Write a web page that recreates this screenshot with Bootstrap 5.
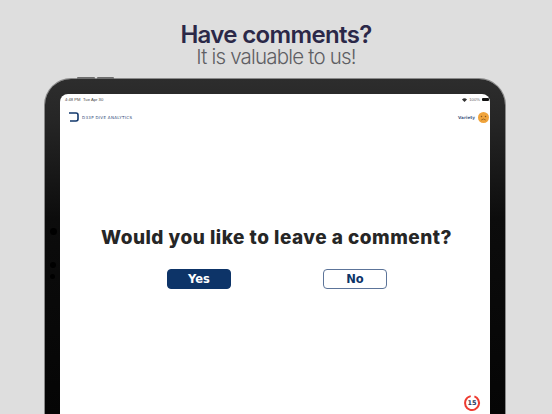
<!DOCTYPE html>
<html lang="en">
  <head>
    <meta charset="UTF-8" />
    <title>Have comments?</title>
    <link href="https://cdn.jsdelivr.net/npm/bootstrap@5.3.3/dist/css/bootstrap.min.css" rel="stylesheet" />
    <style>
      html, body { height: 414px; overflow: hidden; }
      body { background: #dedede; font-family: Inter, sans-serif; }
      .promo-head { height: 79px; padding-top: 23px; }
      .promo-title { font: 600 24px/24px Inter, sans-serif; letter-spacing: -.65px; color: #2b2848; margin: 0; }
      .promo-sub { font: 300 20.5px/20px Inter, sans-serif; letter-spacing: -.8px; color: #5f5f64; margin: 0; }
      .tablet { width: 460px; height: 335px; margin-left: 45px; padding: 15px 15px 0; background: linear-gradient(#2d2d2d 0, #262626 40px, #0c0c0c 140px, #050505 100%); border-radius: 26px 26px 0 0; position: relative; box-shadow: 0 0 0 1px #8a8a8a; }
      .tablet-btn { position: absolute; top: -2px; height: 2px; background: #6d6d6d; border-radius: 1px 1px 0 0; }
      .tablet-btn-a { left: 32px; width: 18px; }
      .tablet-btn-b { left: 52px; width: 17px; }
      .cam { position: absolute; left: 5px; border-radius: 50%; background: #000; }
      .screen { height: 320px; background: #fff; border-radius: 8px 8px 0 0; position: relative; }
      .status-line { height: 11px; padding: 0 1px 0 5px; font: 400 4.2px/11px "Liberation Sans", sans-serif; color: #444; }
      .status-right { gap: 2px; }
      .wifi-pct { color: #666; }
      .batt { width: 7px; height: 3px; background: #111; border-radius: 1px; }
      .app-bar { height: 22px; padding: 0 1px 0 9px; margin-top: 1px; }
      .brand-group { gap: 3px; }
      .brand-text { font: 400 4px "DejaVu Sans", sans-serif; letter-spacing: .32px; color: #2f4a78; }
      .variety { font: 700 4.2px "DejaVu Sans", sans-serif; color: #4a5f88; }
      .question { font: 800 19px/26px Inter, sans-serif; letter-spacing: .49px; color: #262626; margin: 0; padding: 97px 0 0 3px; text-align: center; }
      .answer-row { margin-top: 18px; padding: 0 0 0 107px; gap: 92px; }
      .answer-btn { width: 64px; height: 20px; padding: 0; font: 700 11.5px/18px "DejaVu Sans", sans-serif; border-radius: 4px; border: 1px solid #0d3468; }
      .answer-yes { background: #0d3468; color: #fff; }
      .answer-no { background: #fff; color: #0d3468; border-color: #5c7499; }
      .timer { position: absolute; left: 403px; top: 300px; }
      .timer text { font: 700 6.5px "DejaVu Sans", sans-serif; fill: #2b3a5c; }
    </style>
  </head>
  <body>
    <div class="promo-head text-center">
      <h1 class="promo-title">Have comments?</h1>
      <p class="promo-sub">It is valuable to us!</p>
    </div>

    <div class="tablet">
      <span class="tablet-btn tablet-btn-a"></span>
      <span class="tablet-btn tablet-btn-b"></span>
      <span class="cam" style="top:149px;width:7px;height:7px"></span>
      <span class="cam" style="top:183px;width:6px;height:6px"></span>
      <span class="cam" style="top:195px;width:5px;height:5px"></span>

      <div class="screen">
        <div class="status-line d-flex justify-content-between align-items-center">
          <span>4:48 PM&nbsp;&nbsp;Tue Apr 30</span>
          <span class="status-right d-flex align-items-center">
            <svg width="5" height="4" viewBox="0 0 10 8"><path d="M0 3a7 7 0 0 1 10 0L5 8z" fill="#333"/></svg>
            <span class="wifi-pct">100%</span>
            <span class="batt"></span>
          </span>
        </div>
        <div class="app-bar d-flex justify-content-between align-items-center">
          <div class="brand-group d-flex align-items-center">
            <svg width="10" height="10" viewBox="0 0 10 10"><path d="M0 1H7Q9 1 9 3V7Q9 9 7 9H1" fill="none" stroke="#12386c" stroke-width="1.6"/></svg>
            <span class="brand-text">D33P DIVE ANALYTICS</span>
          </div>
          <div class="brand-group d-flex align-items-center">
            <span class="variety">Variety</span>
            <svg width="11" height="11" viewBox="0 0 22 22">
              <circle cx="11" cy="11" r="11" fill="#f0a43c"/>
              <circle cx="7" cy="9" r="1.5" fill="#8a5a20"/>
              <circle cx="15" cy="9" r="1.5" fill="#8a5a20"/>
              <path d="M6.5 16q4.5-4 9 0" fill="none" stroke="#8a5a20" stroke-width="1.5"/>
            </svg>
          </div>
        </div>

        <h2 class="question">Would you like to leave a comment?</h2>
        <div class="answer-row d-flex">
          <button class="answer-btn answer-yes" type="button">Yes</button>
          <button class="answer-btn answer-no" type="button">No</button>
        </div>

        <svg class="timer" width="18" height="18" viewBox="0 0 18 18">
          <circle cx="9" cy="9" r="7" fill="none" stroke="#ee3b30" stroke-width="2" stroke-dasharray="40 4" transform="rotate(-70 9 9)"/>
          <text x="9" y="11.4" text-anchor="middle">15</text>
        </svg>
      </div>
    </div>
    <script src="https://cdn.jsdelivr.net/npm/bootstrap@5.3.3/dist/js/bootstrap.bundle.min.js"></script>
  </body>
</html>
